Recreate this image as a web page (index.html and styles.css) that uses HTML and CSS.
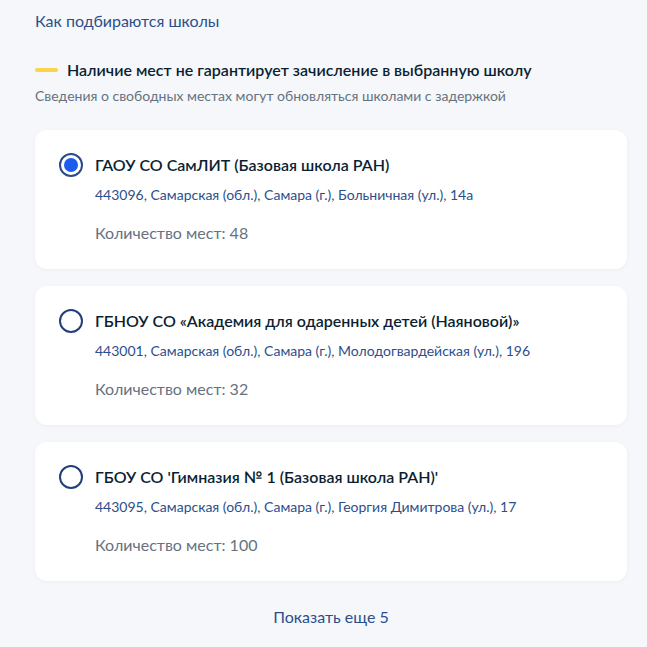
FILE: index.html
```html
<!DOCTYPE html>
<html lang="ru">
<head>
    <meta charset="UTF-8">
    <meta name="viewport" content="width=device-width, initial-scale=1.0">
    <title>Выбор школы</title>
    <link rel="stylesheet" href="styles.css">
</head>
<body>
    <div class="page">
        <a class="how-link" href="#">Как подбираются школы</a>

        <div class="notice">
            <div class="notice-title">
                <span class="notice-dash"></span>
                <span>Наличие мест не гарантирует зачисление в выбранную школу</span>
            </div>
            <div class="notice-text">Сведения о свободных местах могут обновляться школами с задержкой</div>
        </div>

        <div class="school-list">
            <label class="school-card">
                <span class="radio radio-checked"></span>
                <div class="school-info">
                    <div class="school-name">ГАОУ СО СамЛИТ (Базовая школа РАН)</div>
                    <div class="school-address">443096, Самарская (обл.), Самара (г.), Больничная (ул.), 14а</div>
                    <div class="school-places">Количество мест: 48</div>
                </div>
            </label>
            <label class="school-card">
                <span class="radio"></span>
                <div class="school-info">
                    <div class="school-name">ГБНОУ СО «Академия для одаренных детей (Наяновой)»</div>
                    <div class="school-address">443001, Самарская (обл.), Самара (г.), Молодогвардейская (ул.), 196</div>
                    <div class="school-places">Количество мест: 32</div>
                </div>
            </label>
            <label class="school-card">
                <span class="radio"></span>
                <div class="school-info">
                    <div class="school-name">ГБОУ СО 'Гимназия № 1 (Базовая школа РАН)'</div>
                    <div class="school-address">443095, Самарская (обл.), Самара (г.), Георгия Димитрова (ул.), 17</div>
                    <div class="school-places">Количество мест: 100</div>
                </div>
            </label>
        </div>

        <div class="more">
            <a class="more-link" href="#">Показать еще 5</a>
        </div>
    </div>
</body>
</html>
```

FILE: styles.css
```css
body {
    margin: 0;
    background: #f5f7fa;
    font-family: Lato, "Noto Sans", sans-serif;
    color: #0b1f33;
}
.page {
    width: 592px;
    padding: 11px 0 0 35px;
}
.how-link {
    display: block;
    font-size: 16px;
    line-height: 20px;
    color: #2c4f8c;
    text-decoration: none;
}
.notice {
    margin-top: 29px;
}
.notice-title {
    display: flex;
    align-items: center;
    font-size: 16px;
    line-height: 20px;
    font-weight: 600;
    color: #0b1f33;
}
.notice-dash {
    width: 23px;
    height: 4px;
    border-radius: 2px;
    background: #fcd34d;
    margin-right: 9px;
}
.notice-text {
    margin-top: 6px;
    font-size: 14px;
    line-height: 20px;
    color: #66727f;
}
.school-list {
    margin-top: 24px;
    display: flex;
    flex-direction: column;
    gap: 17px;
}
.school-card {
    display: flex;
    align-items: flex-start;
    background: #fff;
    border-radius: 12px;
    box-shadow: 0 1px 4px rgba(0, 0, 0, .04);
    padding: 25px 24px 26px;
    cursor: pointer;
}
.radio {
    flex: none;
    width: 24px;
    height: 24px;
    box-sizing: border-box;
    border: 2px solid #233f7a;
    border-radius: 50%;
    margin-top: -2px;
    margin-right: 12px;
    display: flex;
    align-items: center;
    justify-content: center;
}
.radio-checked {
    border-color: #2b4a8a;
}
.radio-checked::after {
    content: "";
    width: 14px;
    height: 14px;
    border-radius: 50%;
    background: #1d5deb;
}
.school-name {
    font-size: 16px;
    line-height: 20px;
    font-weight: 600;
}
.school-address {
    margin-top: 10px;
    font-size: 14px;
    line-height: 20px;
    color: #2c4f8c;
}
.school-places {
    margin-top: 18px;
    font-size: 16px;
    line-height: 20px;
    color: #66727f;
}
.more {
    margin-top: 26px;
    text-align: center;
}
.more-link {
    font-size: 16px;
    line-height: 20px;
    color: #2c4f8c;
    text-decoration: none;
}
```
